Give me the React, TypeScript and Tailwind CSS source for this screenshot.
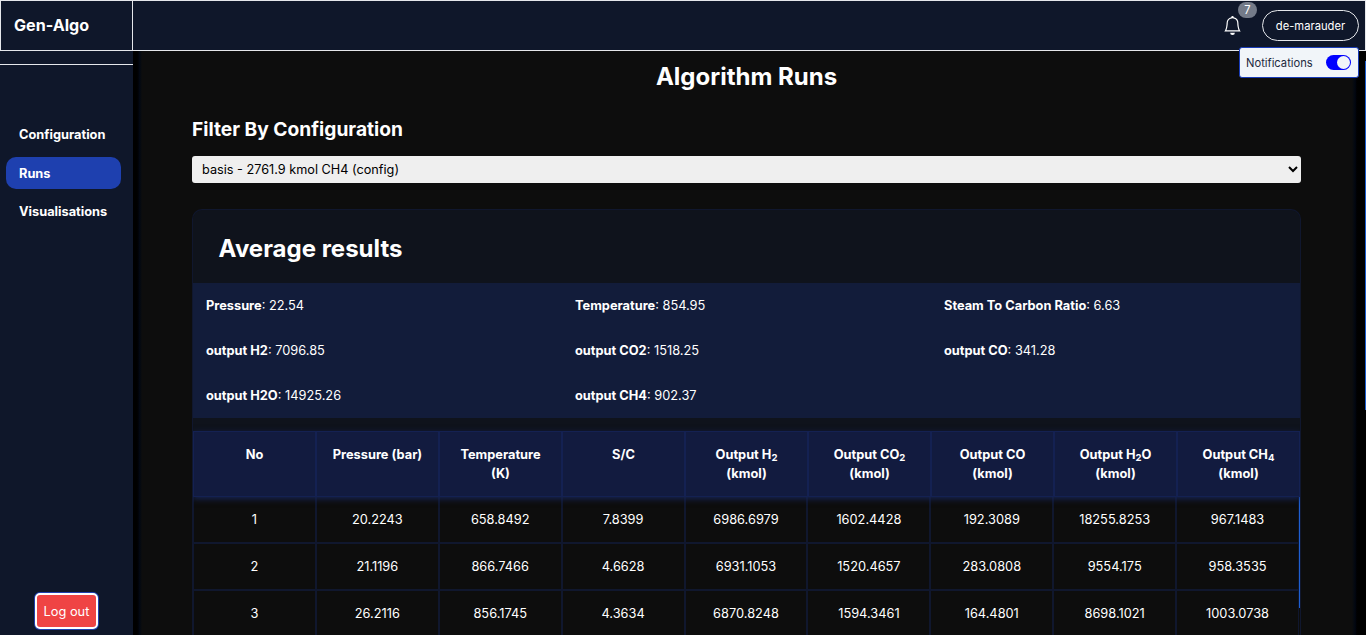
import React from "react";
import { BsBell } from "react-icons/bs";

const averages: [string, string][] = [
  ["Pressure", "22.54"],
  ["Temperature", "854.95"],
  ["Steam To Carbon Ratio", "6.63"],
  ["output H2", "7096.85"],
  ["output CO2", "1518.25"],
  ["output CO", "341.28"],
  ["output H2O", "14925.26"],
  ["output CH4", "902.37"],
];

const sub = (text: string) => <sub className="text-[9.6px]">{text}</sub>;

const headings: React.ReactNode[] = [
  "No",
  "Pressure (bar)",
  <>Temperature<br />(K)</>,
  "S/C",
  <>Output H{sub("2")}<br />(kmol)</>,
  <>Output CO{sub("2")}<br />(kmol)</>,
  <>Output CO<br />(kmol)</>,
  <>Output H{sub("2")}O<br />(kmol)</>,
  <>Output CH{sub("4")}<br />(kmol)</>,
];

const rows = [
  ["1", "20.2243", "658.8492", "7.8399", "6986.6979", "1602.4428", "192.3089", "18255.8253", "967.1483"],
  ["2", "21.1196", "866.7466", "4.6628", "6931.1053", "1520.4657", "283.0808", "9554.175", "958.3535"],
  ["3", "26.2116", "856.1745", "4.3634", "6870.8248", "1594.3461", "164.4801", "8698.1021", "1003.0738"],
];

function Header() {
  return (
    <header className="flex h-[51px] shrink-0 border border-gray-200 bg-[#0f172a]">
      <div className="flex w-[132px] items-center border-r border-gray-200 pl-[13px] text-[16.1px] font-bold">
        Gen-Algo
      </div>
      <div className="flex flex-1 items-center justify-end pr-1.5">
        <button className="relative mr-5" aria-label="Notifications">
          <BsBell className="size-[19px]" />
          <span className="absolute -top-[14px] left-[15px] flex h-[16px] w-[19px] items-center justify-center rounded-full bg-[#747b89] pt-px text-[11.2px]">
            7
          </span>
        </button>
        <button className="h-[31px] w-[97px] rounded-full border border-gray-200 pt-0.5 text-[11.2px]">de-marauder</button>
      </div>
      <div className="absolute top-[47px] right-[7px] z-20 flex h-[31px] w-[120px] items-center justify-between rounded-[3px] border border-blue-800 bg-slate-100 pr-[7px] pl-1.5 text-[11.2px] text-slate-800">
        <span className="pt-0.5">Notifications</span>
        <span className="flex h-[15px] w-[25px] items-center justify-end rounded-full bg-[#0000ff] pr-px">
          <span className="size-[13px] rounded-full bg-slate-100" />
        </span>
      </div>
    </header>
  );
}

function Sidebar() {
  return (
    <aside className="flex w-[133px] shrink-0 flex-col bg-[#0f172a] pb-1.5">
      <div className="h-[14px] border-b border-gray-200" />
      <nav className="mt-[53px] flex flex-col gap-[6.5px] pr-3 pl-1.5 font-bold">
        <a className="flex h-8 items-center rounded-[10px] pt-px pl-[13px]">Configuration</a>
        <a className="flex h-8 items-center rounded-[10px] bg-[#1e40af] pt-0.5 pl-[13px]">Runs</a>
        <a className="flex h-8 items-center rounded-[10px] pt-px pl-[13px]">Visualisations</a>
      </nav>
      <button className="mt-auto h-[36px] w-[63px] self-center rounded-[5px] border-2 border-white bg-[#ef4444] pt-px shadow-[0_0_0_1px_#1e40af]">
        Log out
      </button>
    </aside>
  );
}

function Results() {
  return (
    <section className="mt-[26px] flex min-h-0 flex-1 flex-col overflow-hidden rounded-t-[10px] border border-b-0 border-[#10172e] bg-[#0f131c]">
      <h2 className="flex h-[73px] shrink-0 items-center pt-[5px] pl-[25.6px] text-[24px] font-bold">Average results</h2>
      <div className="grid shrink-0 grid-cols-3 bg-[#121c3a]">
        {averages.map(([name, value]) => (
          <p key={name} className="flex h-[45px] items-center pl-[13px] whitespace-pre">
            <strong className="font-bold">{name}</strong>: {value}
          </p>
        ))}
      </div>
      <div className="relative z-10 mt-[13px] grid h-[66px] shrink-0 grid-cols-9 bg-[#121b3f] text-center leading-[19.2px] font-bold shadow-[0_2px_6px_#172554]">
        {headings.map((heading, i) => (
          <div key={i} className="border border-[#142152] pt-[13px]">{heading}</div>
        ))}
      </div>
      <div className="-mt-px flex min-h-0 flex-1 items-start overflow-hidden bg-[#0d0d0d]">
        <div className="grid flex-1 grid-cols-9 text-center">
          {rows.flat().map((value, i) => (
            <div key={i} className="flex h-[47px] items-center justify-center border border-[#10172e]">{value}</div>
          ))}
        </div>
        <div className="h-[112px] w-px bg-[#1d5fd0]" />
      </div>
    </section>
  );
}

export default function App() {
  return (
    <div className="relative flex h-[635px] w-full flex-col overflow-hidden bg-[#0d0d0d] font-['Inter',sans-serif] text-[12.8px] leading-[19.2px] text-white">
      <Header />
      <div className="flex min-h-0 flex-1">
        <Sidebar />
        <div className="w-[9px] shrink-0 bg-linear-to-r from-black from-30% via-[#020712] via-70% to-[#0d0d0d]" />
        <main className="flex min-w-0 flex-1 flex-col pr-[51px] pl-[50px]">
          <h1 className="mt-[9px] text-center text-[24px] leading-[34px] font-bold">Algorithm Runs</h1>
          <h2 className="mt-[21px] text-[19.2px] leading-[29px] font-bold">Filter By Configuration</h2>
          <select className="mt-3 h-[27px] w-full shrink-0 rounded-[3px] bg-[#efefef] px-[6px] text-[12.7px] text-black">
            <option>basis - 2761.9 kmol CH4 (config)</option>
          </select>
          <Results />
        </main>
        <div className="w-[13px] shrink-0 bg-linear-to-l from-black from-50% via-[#020712] via-75% to-[#0d0d0d]" />
        <div className="w-px shrink-0 bg-black pt-[10px]">
          <div className="h-[349px] bg-[#1d5fd0]" />
        </div>
      </div>
    </div>
  );
}
